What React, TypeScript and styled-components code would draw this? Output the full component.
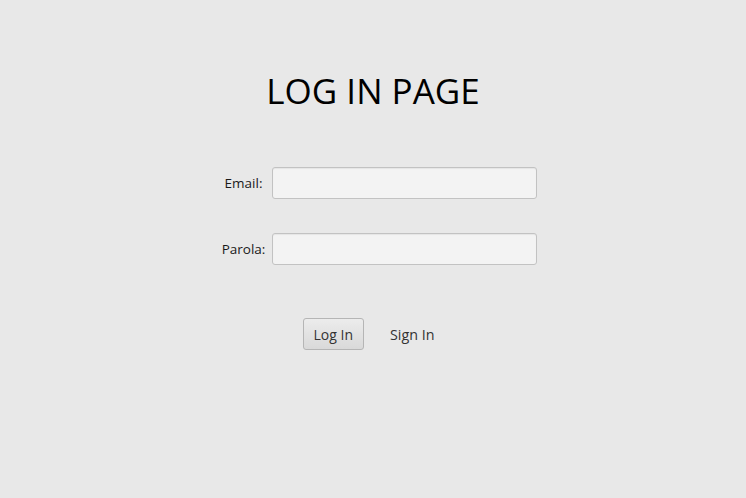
import React from 'react'
import styled, { createGlobalStyle } from 'styled-components'

const GlobalStyle = createGlobalStyle`
  html, body {
    margin: 0;
    padding: 0;
    background: #e8e8e8;
    font-family: 'Open Sans', 'Noto Sans', sans-serif;
  }
`

const Page = styled.div`
  width: 746px;
  height: 498px;
  display: flex;
  flex-direction: column;
  align-items: center;
  box-sizing: border-box;
  padding-top: 68px;
`

const Title = styled.h1`
  margin: 0;
  font-weight: 400;
  font-size: 35px;
  line-height: 46px;
  color: #000;
  letter-spacing: 0;
`

const Form = styled.div`
  display: grid;
  grid-template-columns: 57px 265px;
  row-gap: 34px;
  align-items: center;
  margin-top: 53px;
  margin-left: 6px;
`

const Label = styled.label`
  font-size: 13.5px;
  color: #1a1a1a;
  text-align: center;
  white-space: nowrap;
`

const Input = styled.input`
  box-sizing: border-box;
  width: 265px;
  height: 32px;
  margin: 0;
  padding: 0 8px;
  border: 1px solid #c2c2c2;
  border-radius: 3px;
  background: #f3f3f3;
  box-shadow: inset 0 1px 1px rgba(0, 0, 0, 0.06);
  outline: none;
  font-family: inherit;
  font-size: 13px;
`

const Actions = styled.div`
  display: flex;
  align-items: center;
  gap: 19px;
  margin-top: 53px;
  margin-left: -2px;
`

const Button = styled.button`
  box-sizing: border-box;
  height: 32px;
  padding: 0 10px;
  border: 1px solid #b5b5b5;
  border-radius: 3px;
  background: linear-gradient(#ececec, #d9d9d9);
  font-family: inherit;
  font-size: 14px;
  color: #333;
  cursor: pointer;
`

const Link = styled.a`
  padding: 0 7px;
  font-size: 14.3px;
  color: #333;
  text-decoration: none;
  cursor: pointer;
`

export default function App(): JSX.Element {
  return (
    <Page>
      <GlobalStyle />
      <Title>LOG IN PAGE</Title>
      <Form>
        <Label htmlFor="email">Email:</Label>
        <Input id="email" type="text" />
        <Label htmlFor="parola">Parola:</Label>
        <Input id="parola" type="password" />
      </Form>
      <Actions>
        <Button>Log In</Button>
        <Link>Sign In</Link>
      </Actions>
    </Page>
  )
}
